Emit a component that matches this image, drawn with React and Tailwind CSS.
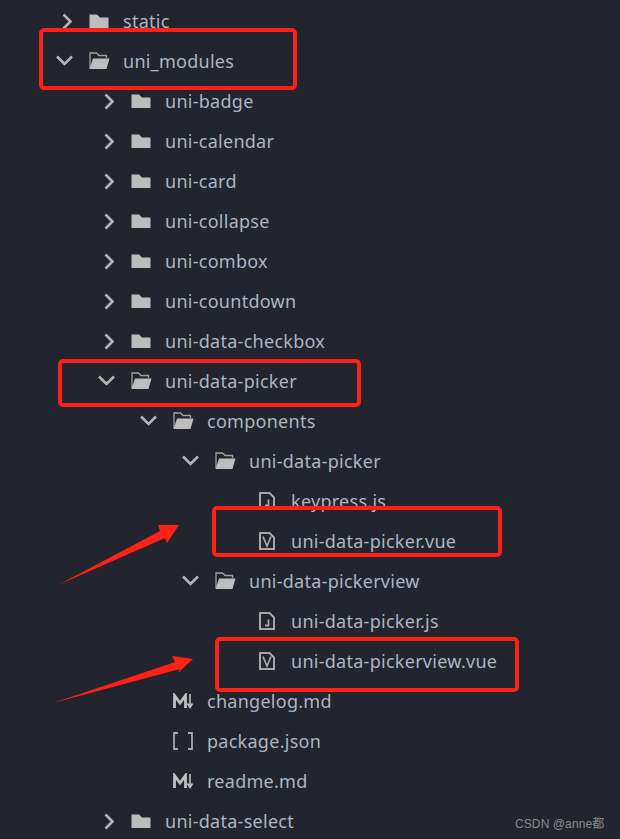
const rows = [
  { name: "static", level: 0, type: "closed" },
  { name: "uni_modules", level: 0, type: "open" },
  { name: "uni-badge", level: 1, type: "closed" },
  { name: "uni-calendar", level: 1, type: "closed" },
  { name: "uni-card", level: 1, type: "closed" },
  { name: "uni-collapse", level: 1, type: "closed" },
  { name: "uni-combox", level: 1, type: "closed" },
  { name: "uni-countdown", level: 1, type: "closed" },
  { name: "uni-data-checkbox", level: 1, type: "closed" },
  { name: "uni-data-picker", level: 1, type: "open" },
  { name: "components", level: 2, type: "open" },
  { name: "uni-data-picker", level: 3, type: "open" },
  { name: "keypress.js", level: 4, type: "js" },
  { name: "uni-data-picker.vue", level: 4, type: "vue" },
  { name: "uni-data-pickerview", level: 3, type: "open" },
  { name: "uni-data-picker.js", level: 4, type: "js" },
  { name: "uni-data-pickerview.vue", level: 4, type: "vue" },
  { name: "changelog.md", level: 2, type: "md" },
  { name: "package.json", level: 2, type: "json" },
  { name: "readme.md", level: 2, type: "md" },
  { name: "uni-data-select", level: 1, type: "closed" },
]

const levelClass = ["pl-[58px]", "pl-[100px]", "pl-[142px]", "pl-[184px]", "pl-[226px]"]

const Chevron = ({ open }) => (
  <svg className="overflow-visible" width="18" height="18" viewBox="0 0 18 18" fill="none" stroke="#b4b4b4" strokeWidth="2.6">
    <path d={open ? "M-1 4.5 L6.5 12 L14 4.5" : "M5.5 2.5 L12.5 9.5 L5.5 16.5"} />
  </svg>
)

const FolderClosed = () => (
  <svg width="20" height="18" viewBox="0 0 20 18" fill="#bdbdbd">
    <path d="M0.5 2.5 H8 L11 5.5 H19.5 V16 H0.5 Z" />
  </svg>
)

const FolderOpen = () => (
  <svg className="overflow-visible" width="20" height="18" viewBox="0 0 20 18">
    <path d="M1 16 V1 H7.5 L10 3.5 H17.5 V6" fill="none" stroke="#a0a0a0" strokeWidth="1.3" />
    <path d="M4 6.5 H20.5 L17.5 17 H0.5 Z" fill="#bdbdbd" />
  </svg>
)

const FileIcon = ({ type }) => (
  <svg width="16" height="18" viewBox="0 0 16 18" fill="none" stroke="#a8a8a8">
    <path d="M1 1 H10.5 L15 5.5 V17 H1 Z" strokeWidth="2" />
    {type === "vue" ? (
      <path d="M4 4.5 L8 14 L12 4.5" strokeWidth="1.7" />
    ) : (
      <path d="M9.5 7.5 V13.5 H6" strokeWidth="1.8" />
    )}
  </svg>
)

const MdIcon = () => (
  <svg width="22" height="16" viewBox="0 0 22 16" fill="none" stroke="#c0c0c0">
    <path d="M2.5 15 V2.5 L8 10 L13.5 2.5 V15" strokeWidth="2.8" />
    <path d="M18 1 V14 M15.5 10.5 L18 14.5 L20.5 10.5" strokeWidth="1.6" />
  </svg>
)

const JsonIcon = () => (
  <svg width="20" height="18" viewBox="0 0 20 18" fill="none" stroke="#a8a8a8" strokeWidth="1.8">
    <path d="M5 1 H1 V17 H5 M15 1 H19 V17 H15" />
  </svg>
)

const Row = ({ row }) => {
  const isFolder = row.type === "closed" || row.type === "open"
  return (
    <div className={`flex items-center h-10 ${levelClass[row.level]}`}>
      <span className="flex items-center justify-center w-[18px]">
        {isFolder && <Chevron open={row.type === "open"} />}
      </span>
      <span className="flex items-center justify-center w-[24px] ml-[11px]">
        {row.type === "closed" && <FolderClosed />}
        {row.type === "open" && <FolderOpen />}
        {(row.type === "js" || row.type === "vue") && <FileIcon type={row.type} />}
        {row.type === "md" && <MdIcon />}
        {row.type === "json" && <JsonIcon />}
      </span>
      <span className="ml-[12px] text-[18px] tracking-[0.27px] text-[#adb5c2] whitespace-nowrap">{row.name}</span>
    </div>
  )
}

const RedBox = ({ className }) => (
  <div className={`absolute border-4 border-[#ff2116] rounded-[5px] ${className}`} />
)

export default function App() {
  return (
    <div className="relative w-[620px] h-[839px] overflow-hidden bg-[#22252d] pt-px font-['Noto_Sans',sans-serif]">
      {rows.map((row, i) => (
        <Row key={i} row={row} />
      ))}

      <RedBox className="left-[39px] top-[28px] w-[258px] h-[62px]" />
      <RedBox className="left-[58px] top-[359px] w-[303px] h-[48px]" />
      <RedBox className="left-[212px] top-[506px] w-[290px] h-[51px]" />
      <RedBox className="left-[215px] top-[637px] w-[304px] h-[55px]" />

      {/* arrows */}
      <svg className="absolute left-0 top-0" width="620" height="839" fill="#ff2116">
        <polygon points="58,585 160,531 158,525 179,525 167,543 165,538" />
        <polygon points="53,703 175,662 172,656 193,659 178,673 180,669" />
      </svg>

      <div className="absolute left-[515px] top-[815px] text-[12px] tracking-[0.1px] text-[#8b8b8b] font-['Liberation_Sans','Noto_Sans_CJK_SC',sans-serif]">
        CSDN @anne都
      </div>
    </div>
  )
}
